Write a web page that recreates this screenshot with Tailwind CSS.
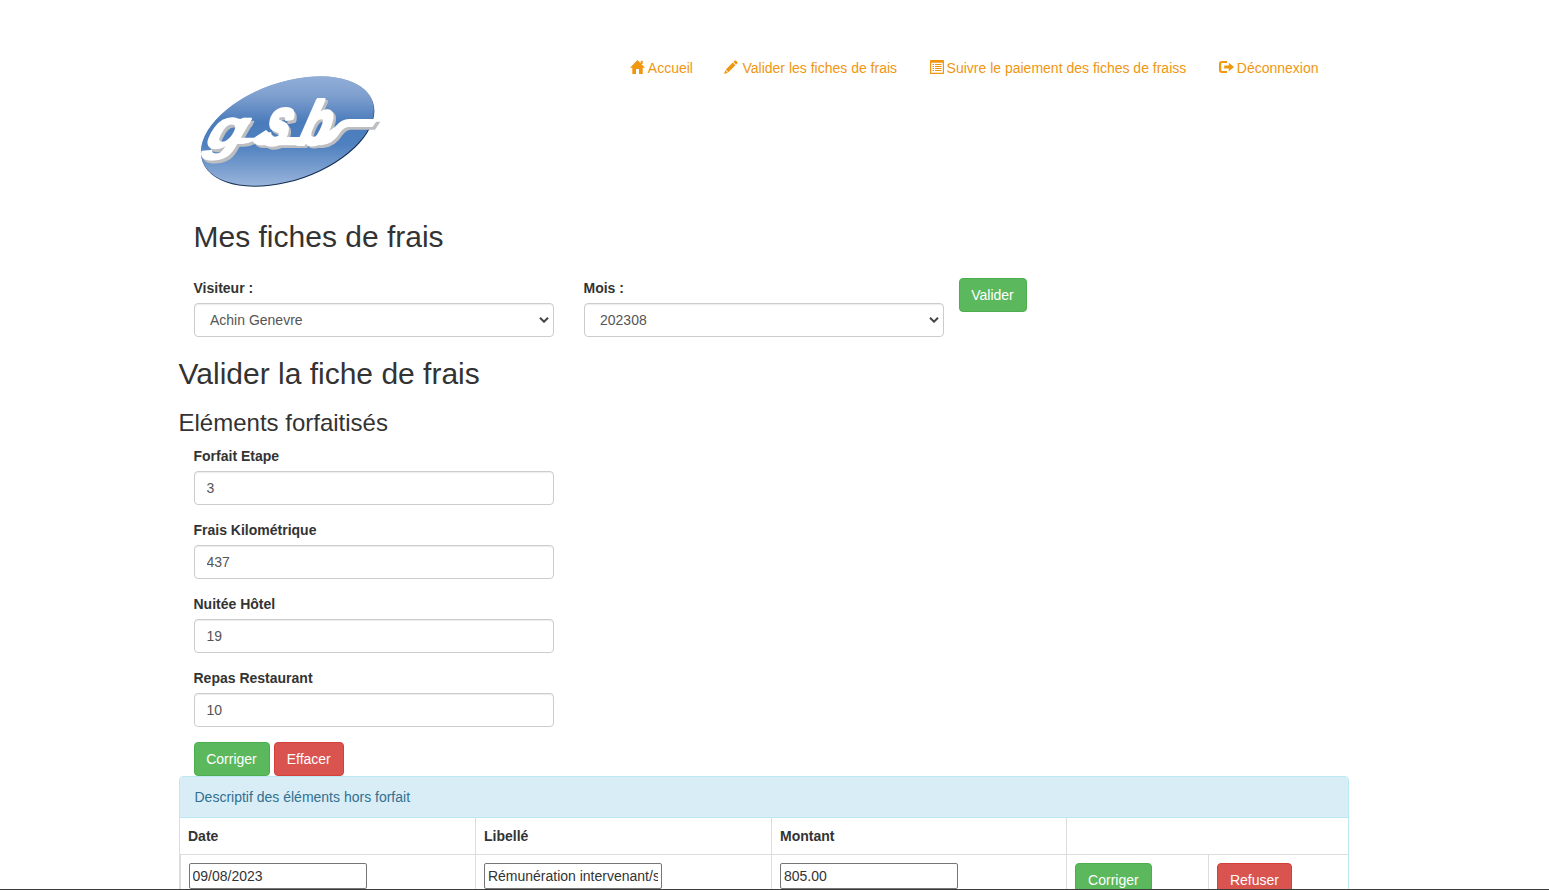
<!DOCTYPE html>
<html lang="fr">
<head>
<meta charset="utf-8">
<title>Intranet du Laboratoire Galaxy-Swiss Bourdin</title>
<script src="https://cdn.jsdelivr.net/npm/@tailwindcss/browser@4"></script>
</head>
<body class="relative h-[890px] overflow-hidden bg-white font-['Liberation_Sans',Arial,sans-serif] text-[14px] leading-[20px] text-[#333]">
<div class="ml-[178.5px] w-[1170px]">
  <header class="flex h-[220px] items-start justify-between pt-[58px] pr-[30px] pl-[11.5px]">
    <svg class="mt-[7px] h-[130px] w-[200px]" viewBox="0 0 600 390" role="img" aria-label="gsb">
      <defs>
        <linearGradient id="oval" gradientUnits="userSpaceOnUse" x1="292" y1="33" x2="292" y2="365" gradientTransform="rotate(19.4 292 198)">
          <stop offset="0" stop-color="#91aed7"/><stop offset=".18" stop-color="#7e9fce"/><stop offset=".42" stop-color="#4a7bbb"/><stop offset=".62" stop-color="#4f80bf"/><stop offset="1" stop-color="#9ab5db"/>
        </linearGradient>
        <linearGradient id="rim" x1="0" y1="0" x2="0" y2="1"><stop offset=".35" stop-color="#8094b2"/><stop offset=".75" stop-color="#142e54"/></linearGradient>
        <g id="word" font-family="Liberation Sans" font-weight="700" font-style="italic" stroke-linejoin="round">
          <text transform="translate(42 250) skewX(-20) scale(1.1 1)" font-size="166" stroke-width="6">g</text>
          <text transform="translate(212 238) skewX(-16) scale(.72 1)" font-size="196" stroke-width="12">s</text>
          <text transform="translate(322 236) skewX(-16) scale(.78 1)" font-size="182" stroke-width="12">b</text>
          <path d="M140 161H186L178 178H132zM130 218H192L228 195L252 216H352L344 241H218Q198 243 188 229Q172 237 157 237H118zM395 210Q425 195 440 181Q454 163 477 162H564L548 186H475Q462 187 450 203Q430 237 393 241H350z" stroke="none"/>
        </g>
      </defs>
      <ellipse cx="293" cy="200" rx="271" ry="147" transform="rotate(-19.4 293 200)" fill="url(#rim)"/>
      <ellipse cx="292" cy="198" rx="270" ry="146" transform="rotate(-19.4 292 198)" fill="url(#oval)"/>
      <use href="#word" x="7" y="8" fill="#bdbec1" stroke="#bdbec1"/>
      <use href="#word" fill="#fff" stroke="#fff"/>
    </svg>
    <nav class="flex gap-[31.5px] whitespace-nowrap text-[#f0960f]">
      <a class="flex gap-[3px]"><svg class="mt-[2px] h-[14px] w-[15px] shrink-0" viewBox="0 0 15 14" fill="currentColor"><path d="M7.5 0L15 7.8H12.7V14H9V9H6V14H2.3V7.8H0zM10.7.8H12.7V4H10.7z"/></svg>Accueil</a>
      <a class="flex gap-[4px]"><svg class="mt-[2px] h-[14px] w-[14px] shrink-0" viewBox="0 0 14 14" fill="currentColor"><path d="M10.5.8Q11.3 0 12.1.8L13.3 2Q14 2.7 13.2 3.5L12 4.6L9.4 2zM8.8 2.6L11.4 5.2L4.4 12.2L1.8 9.6zM1.3 10.2L3.9 12.8L0 14z"/></svg>Valider les fiches de frais</a>
      <a class="flex gap-[3px] pl-[1px]"><svg class="mt-[2px] h-[14px] w-[14px] shrink-0" viewBox="0 0 14 14" fill="currentColor"><path fill-rule="evenodd" d="M.7 0H13.3Q14 0 14 .7V13.3Q14 14 13.3 14H.7Q0 14 0 13.3V.7Q0 0 .7 0zM1.2 2.8V12.8H12.8V2.8z"/><path d="M2.5 4H4V5H2.5zM5 4H11.5V5H5zM2.5 6H4V7H2.5zM5 6H11.5V7H5zM2.5 8H4V9H2.5zM5 8H11.5V9H5zM2.5 10H4V11H2.5zM5 10H11.5V11H5z"/></svg>Suivre le paiement des fiches de fraiss</a>
      <a class="flex gap-[3px] pl-[1px]"><svg class="mt-[2px] h-[14px] w-[15px] shrink-0" viewBox="0 0 15 14" fill="currentColor"><path d="M8 1H3Q0 1 0 4V10Q0 13 3 13H8V11H3.2Q2.2 11 2.2 10V4Q2.2 3 3.2 3H8zM9.8 2.8L15 7L9.8 11.2V8.5H5.2V5.5H9.8z"/></svg>Déconnexion</a>
    </nav>
  </header>

  <h2 class="ml-[15px] text-[30px] leading-[33px]">Mes fiches de frais</h2>
  <form class="mt-[25px] flex pl-[15px]">
    <div class="w-[360px]">
      <label class="mb-[5px] block font-bold">Visiteur :</label>
      <div class="flex h-[34px] items-center justify-between rounded-[4px] border border-[#ccc] pr-[4px] pl-[15.5px] text-[#555] shadow-[inset_0_1px_1px_rgba(0,0,0,.075)]">Achin Genevre<svg class="h-[6px] w-[10px]" viewBox="0 0 10 6" fill="none" stroke="#444" stroke-width="2"><path d="M1 .8L5 4.7L9 .8"/></svg></div>
    </div>
    <div class="ml-[30px] w-[360px]">
      <label class="mb-[5px] block font-bold">Mois :</label>
      <div class="flex h-[34px] items-center justify-between rounded-[4px] border border-[#ccc] pr-[4px] pl-[15.5px] text-[#555] shadow-[inset_0_1px_1px_rgba(0,0,0,.075)]">202308<svg class="h-[6px] w-[10px]" viewBox="0 0 10 6" fill="none" stroke="#444" stroke-width="2"><path d="M1 .8L5 4.7L9 .8"/></svg></div>
    </div>
    <button type="button" class="ml-[15px] h-[34px] w-[68px] rounded-[4px] border border-[#4cae4c] bg-[#5cb85c] text-white">Valider</button>
  </form>

  <h2 class="mt-[20px] text-[30px] leading-[33px]">Valider la fiche de frais</h2>
  <h3 class="mt-[20px] text-[24px] leading-[26px]">Eléments forfaitisés</h3>
  <form class="mt-[10px] ml-[15px] w-[360px]">
    <label class="mb-[5px] block font-bold">Forfait Etape</label>
    <input class="mb-[15px] block h-[34px] w-full rounded-[4px] border border-[#ccc] px-[12px] text-[#555] shadow-[inset_0_1px_1px_rgba(0,0,0,.075)]" value="3">
    <label class="mb-[5px] block font-bold">Frais Kilométrique</label>
    <input class="mb-[15px] block h-[34px] w-full rounded-[4px] border border-[#ccc] px-[12px] text-[#555] shadow-[inset_0_1px_1px_rgba(0,0,0,.075)]" value="437">
    <label class="mb-[5px] block font-bold">Nuitée Hôtel</label>
    <input class="mb-[15px] block h-[34px] w-full rounded-[4px] border border-[#ccc] px-[12px] text-[#555] shadow-[inset_0_1px_1px_rgba(0,0,0,.075)]" value="19">
    <label class="mb-[5px] block font-bold">Repas Restaurant</label>
    <input class="mb-[15px] block h-[34px] w-full rounded-[4px] border border-[#ccc] px-[12px] text-[#555] shadow-[inset_0_1px_1px_rgba(0,0,0,.075)]" value="10">
    <div class="flex gap-[4px]">
      <button type="button" class="h-[34px] w-[76px] rounded-[4px] border border-[#4cae4c] bg-[#5cb85c] text-white">Corriger</button>
      <button type="button" class="h-[34px] w-[70.5px] rounded-[4px] border border-[#d43f3a] bg-[#d9534f] text-white">Effacer</button>
    </div>
  </form>

  <section class="rounded-[4px] border border-[#bce8f1]">
    <div class="rounded-t-[3px] border-b border-[#bce8f1] bg-[#d9edf7] px-[15px] py-[10px] text-[#31708f]">Descriptif des éléments hors forfait</div>
    <div class="grid h-[37px] grid-cols-[296px_296px_295px_1fr] border-b border-[#ddd] font-bold">
      <div class="border-r border-[#ddd] p-[8px] pl-[8.5px]">Date</div>
      <div class="border-r border-[#ddd] p-[8px] pl-[8.5px]">Libellé</div>
      <div class="border-r border-[#ddd] p-[8px] pl-[8.5px]">Montant</div>
      <div></div>
    </div>
    <div class="grid h-[51px] grid-cols-[296px_296px_295px_142px_1fr]">
      <div class="border-x border-[#ddd] py-[8px] pl-[8px]"><input class="block h-[26px] w-[178px] rounded-[2px] border border-[#767676] px-[3px]" value="09/08/2023"></div>
      <div class="border-r border-[#ddd] py-[8px] pl-[8.4px]"><input class="block h-[26px] w-[178px] rounded-[2px] border border-[#767676] px-[3px]" value="Rémunération intervenant/spécialiste"></div>
      <div class="border-r border-[#ddd] py-[8px] pl-[8.4px]"><input class="block h-[26px] w-[178px] rounded-[2px] border border-[#767676] px-[3px]" value="805.00"></div>
      <div class="border-r border-[#ddd] py-[8px] pl-[8.4px]"><button type="button" class="h-[34px] w-[77px] rounded-[4px] border border-[#4cae4c] bg-[#5cb85c] text-white">Corriger</button></div>
      <div class="py-[8px] pl-[8.4px]"><button type="button" class="h-[34px] w-[75px] rounded-[4px] border border-[#d43f3a] bg-[#d9534f] text-white">Refuser</button></div>
    </div>
  </section>
</div>
<div class="absolute inset-x-0 bottom-0 h-px bg-[#3c3c3c]"></div>
</body>
</html>
